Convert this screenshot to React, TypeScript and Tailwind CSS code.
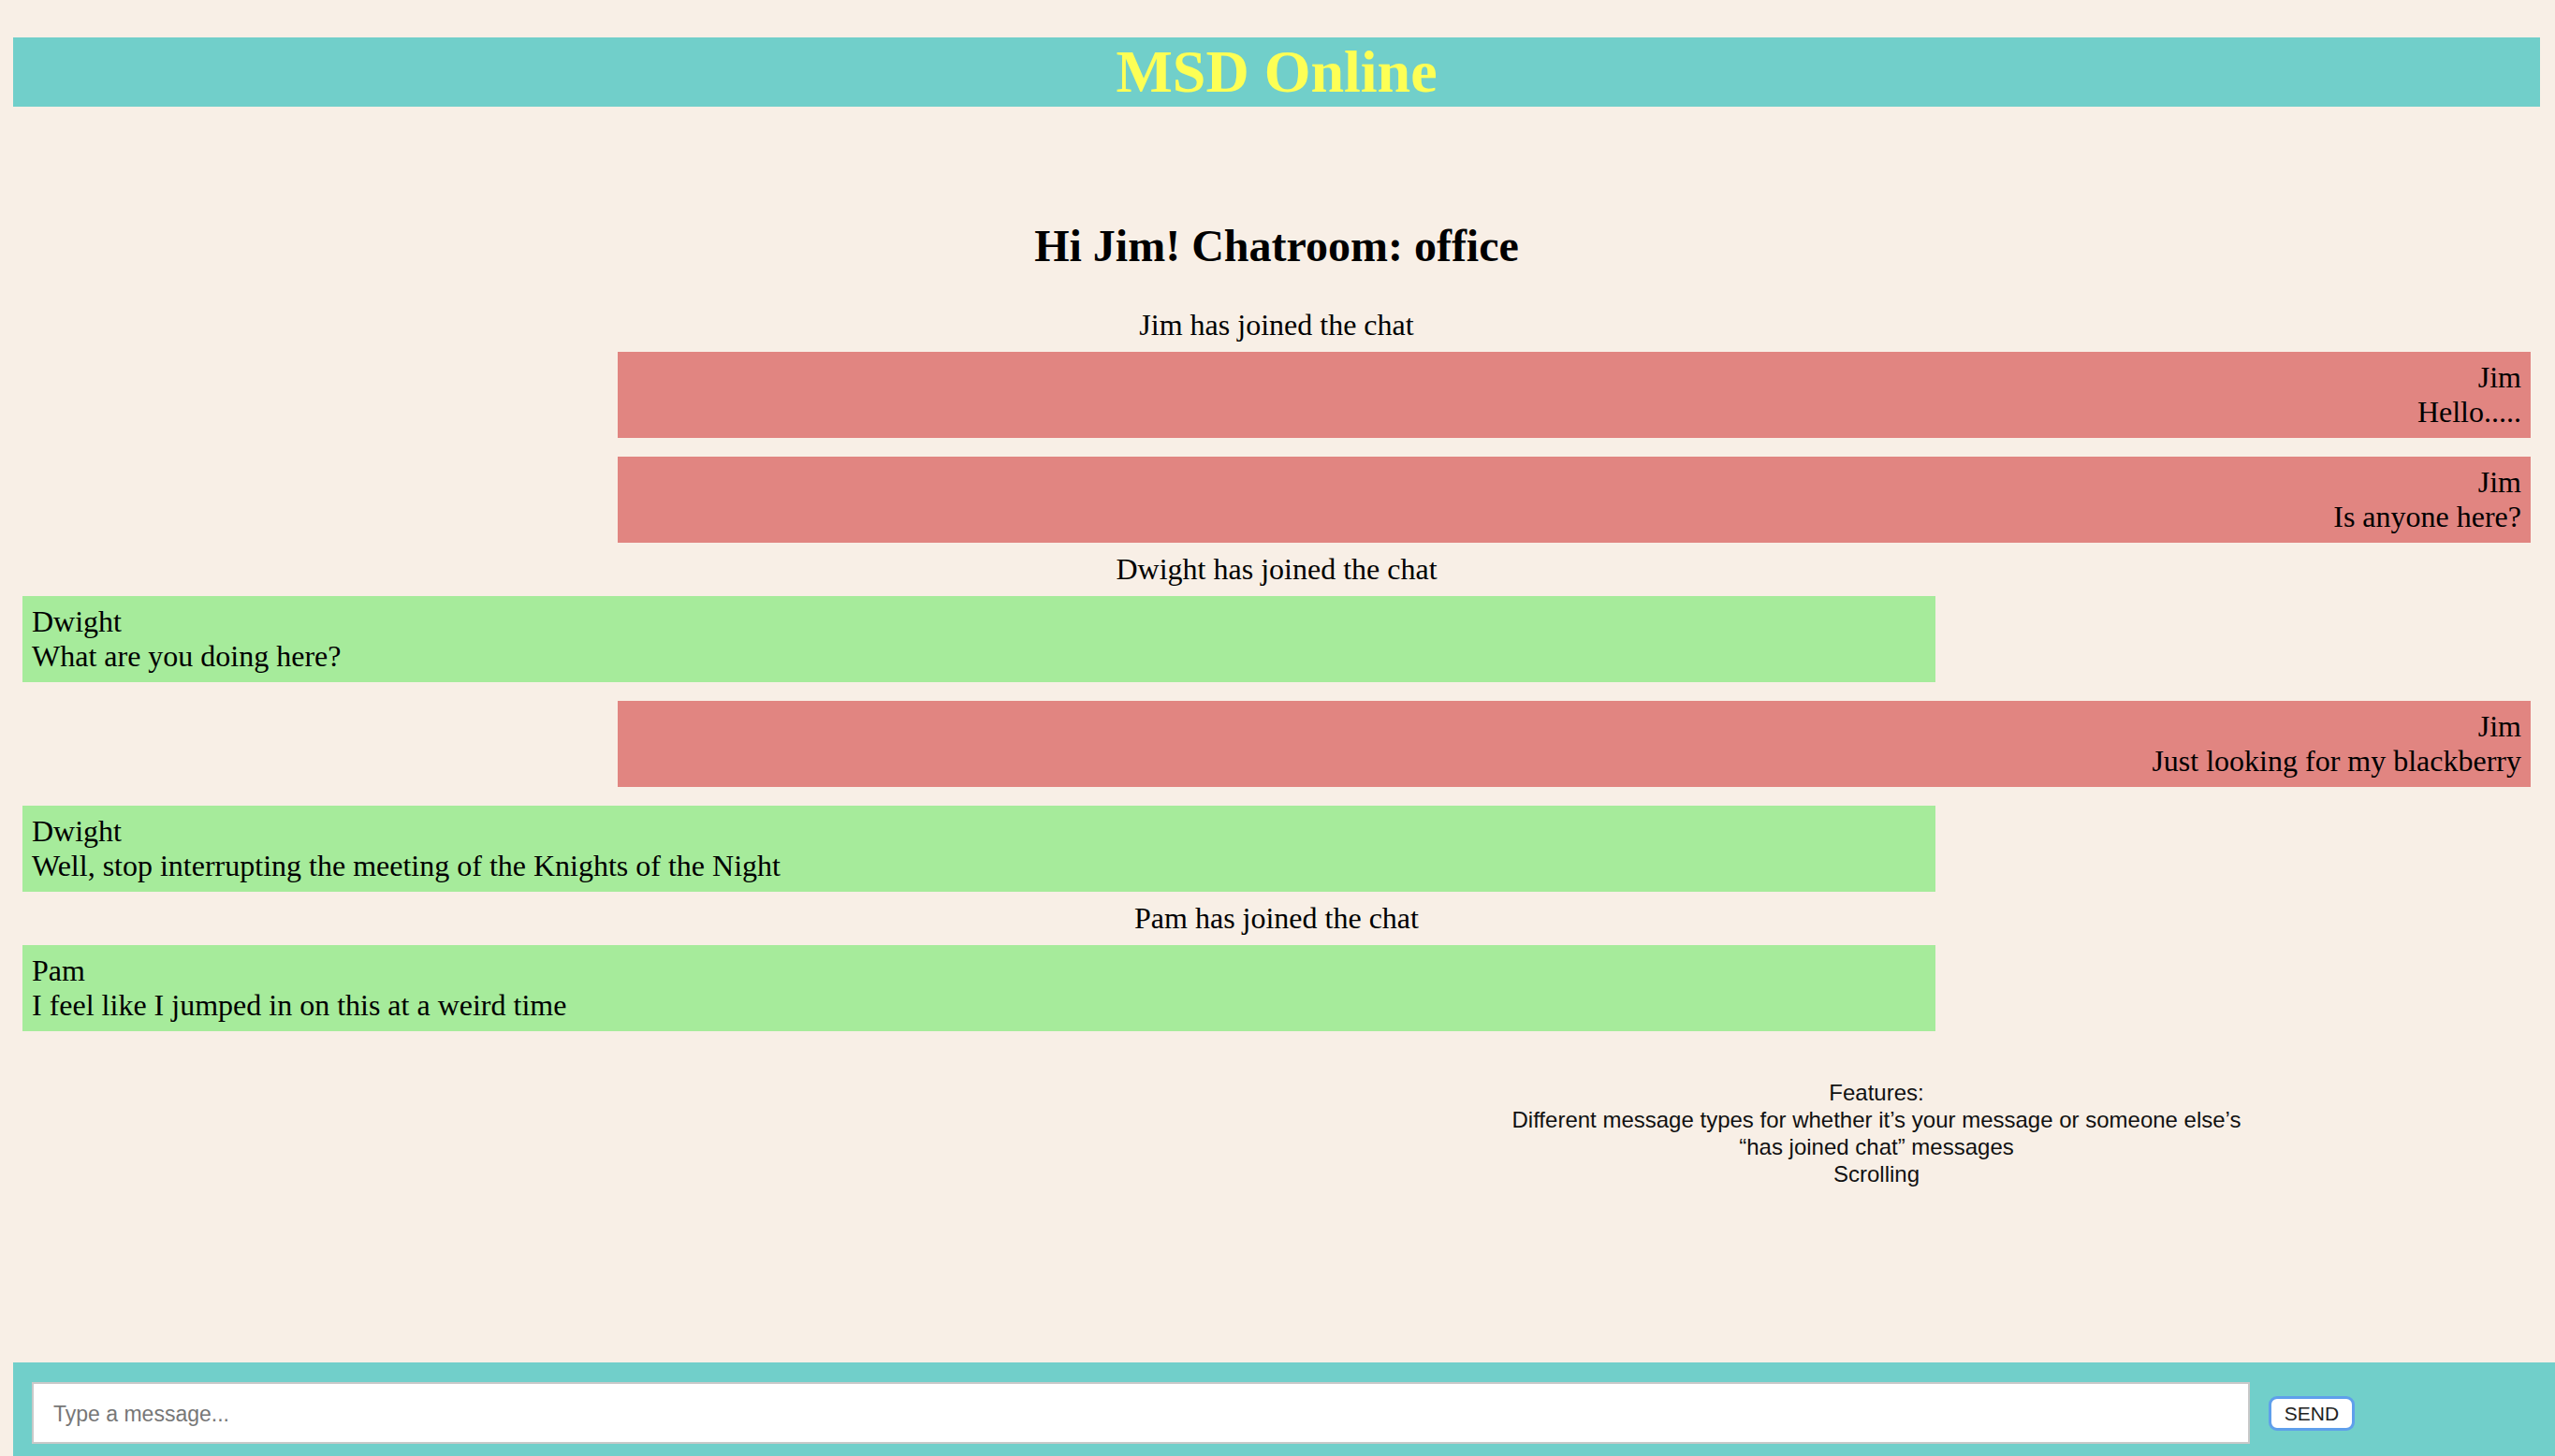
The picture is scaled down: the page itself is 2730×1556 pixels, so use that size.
import { useState } from 'react';

type Entry =
  | { kind: 'joined'; name: string }
  | { kind: 'msg'; name: string; text: string; mine: boolean };

const entries: Entry[] = [
  { kind: 'joined', name: 'Jim' },
  { kind: 'msg', name: 'Jim', text: 'Hello.....', mine: true },
  { kind: 'msg', name: 'Jim', text: 'Is anyone here?', mine: true },
  { kind: 'joined', name: 'Dwight' },
  { kind: 'msg', name: 'Dwight', text: 'What are you doing here?', mine: false },
  { kind: 'msg', name: 'Jim', text: 'Just looking for my blackberry', mine: true },
  { kind: 'msg', name: 'Dwight', text: 'Well, stop interrupting the meeting of the Knights of the Night', mine: false },
  { kind: 'joined', name: 'Pam' },
  { kind: 'msg', name: 'Pam', text: 'I feel like I jumped in on this at a weird time', mine: false },
];

const features = [
  'Features:',
  'Different message types for whether it\u2019s your message or someone else\u2019s',
  '\u201chas joined chat\u201d messages',
  'Scrolling',
];

export default function App() {
  const [draft, setDraft] = useState('');

  return (
    <div className="h-screen flex flex-col bg-[#f8efe6] font-['Liberation_Serif',serif] text-black overflow-hidden">
      {/* Title bar */}
      <header className="mt-[40px] ml-[14px] mr-[16px] h-[74px] bg-[#71cfca] text-center">
        <h1 className="text-[64px] leading-[74px] font-bold text-[#fdff55]">MSD Online</h1>
      </header>

      <main className="mx-[14px] mr-[26px] pl-[10px] flex flex-col">
        <h2 className="mt-[121px] text-center text-[48px] leading-[55px] font-bold">Hi Jim! Chatroom: office</h2>

        <div className="mt-[39px] flex flex-col text-[32px] leading-[37px]">
          {entries.map((e, i) =>
            e.kind === 'joined' ? (
              <p key={i} className="text-center">
                {e.name} has joined the chat
              </p>
            ) : (
              <div
                key={i}
                className={
                  e.mine
                    ? 'my-[10px] ml-auto w-[2044px] bg-[#e18581] px-[10px] py-[9px] text-right'
                    : 'my-[10px] w-[2044px] bg-[#a6eb9b] px-[10px] py-[9px] text-left'
                }
              >
                <div>{e.name}</div>
                <div>{e.text}</div>
              </div>
            )
          )}
        </div>

        {/* Feature notes */}
        <div className="mt-[41px] flex justify-end">
          <div className="w-[1398px] text-center font-['Liberation_Sans',Arial,sans-serif] text-[24px] leading-[29px] text-[#111]">
            {features.map((f) => (
              <div key={f}>{f}</div>
            ))}
          </div>
        </div>
      </main>

      {/* Composer */}
      <footer className="mt-auto ml-[14px] h-[100px] bg-[#71cfca] pt-[8px] pl-[20px] flex items-center gap-[20px]">
        <input
          value={draft}
          onChange={(ev) => setDraft(ev.target.value)}
          placeholder="Type a message..."
          className="w-[2370px] h-[66px] bg-white border-2 border-[#c9c9c9] pl-[21px] pt-[2px] font-['Liberation_Sans',Arial,sans-serif] text-[23px] text-[#222] placeholder:text-[#777] outline-none"
        />
        <button className="w-[92px] h-[37px] bg-white border-[3px] border-[#5f9feb] rounded-[9px] font-['Liberation_Sans',Arial,sans-serif] text-[21px] leading-none text-[#222]">
          SEND
        </button>
      </footer>
    </div>
  );
}
